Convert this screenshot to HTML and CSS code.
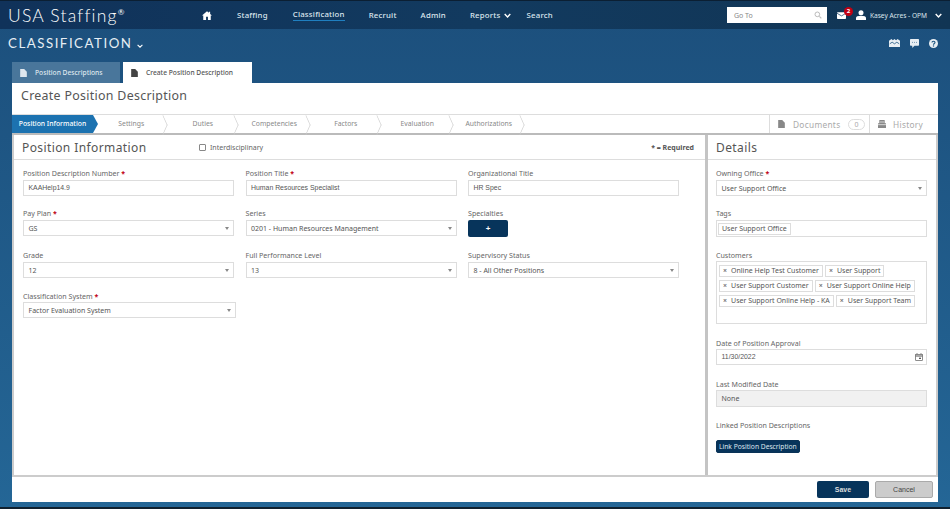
FILE: index.html
```html
<!DOCTYPE html>
<html lang="en">
<head>
  <meta charset="UTF-8" />
  <meta name="viewport" content="width=device-width, initial-scale=1.0"/>
  <title>Create Position Description</title>
  <link rel="stylesheet" href="styles.css">
</head>
<body>

  <!-- Top navigation -->
  <header class="topbar">
    <div class="logo">USA Staffing<sup>®</sup></div>
    <nav class="nav">
      <svg class="home" viewBox="0 0 16 14" width="10" height="9"><path fill="#fff" d="M8 0 0 7h2v7h4.500V9h3v5H14V7h2l-3-2.600V1h-2v1.700z"/></svg>
      <a class="nav-staffing">Staffing</a>
      <a class="nav-active">Classification</a>
      <a>Recruit</a>
      <a>Admin</a>
      <a>Reports <svg class="chev" viewBox="0 0 10 6" width="7" height="5"><path d="M1 1l4 4 4-4" fill="none" stroke="#fff" stroke-width="2"/></svg></a>
      <a class="nav-search">Search</a>
    </nav>
    <div class="top-right">
      <div class="goto">
        <span>Go To</span>
        <svg viewBox="0 0 12 12" width="8" height="8"><circle cx="5" cy="5" r="3.500" fill="none" stroke="#bbb" stroke-width="1.500"/><path d="M8 8l3 3" stroke="#bbb" stroke-width="1.800"/></svg>
      </div>
      <div class="mail">
        <svg viewBox="0 0 12 9" width="9" height="7"><rect width="12" height="9" rx="1" fill="#fff"/><path d="M0 1.500 6 5l6-3.500" fill="none" stroke="#16406a" stroke-width="1"/></svg>
        <b class="badge">2</b>
      </div>
      <svg viewBox="0 0 12 12" width="10" height="10"><circle cx="6" cy="3.200" r="3" fill="#fff"/><path fill="#fff" d="M0 12V9.500C0 8 2 7 6 7s6 1 6 2.500V12z"/></svg>
      <span class="user">Kasey Acres - OPM</span>
      <svg class="chev" viewBox="0 0 10 6" width="7" height="5"><path d="M1 1l4 4 4-4" fill="none" stroke="#fff" stroke-width="2"/></svg>
    </div>
  </header>

  <!-- Section title -->
  <div class="subbar">
    <div class="section">CLASSIFICATION <svg viewBox="0 0 10 6" width="6" height="4"><path d="M1 1l4 4 4-4" fill="none" stroke="#fff" stroke-width="1.800"/></svg></div>
    <div class="sub-icons">
      <svg viewBox="0 0 14 10" width="11" height="8"><path fill="#e8eef3" d="M0 2l3-2 2 1.500L7 0l2 1.500L11 0l3 2v8H0z"/><path d="M1 6l3-2 3 2 3-2 3 2" fill="none" stroke="#1d5582"/></svg>
      <svg viewBox="0 0 12 12" width="9" height="9"><path fill="#e8eef3" d="M1 0h10a1 1 0 0 1 1 1v7a1 1 0 0 1-1 1H6l-3 3V9H1a1 1 0 0 1-1-1V1a1 1 0 0 1 1-1z"/><path d="M3 4.500h1M5.500 4.500h1M8 4.500h1" stroke="#1d5582"/></svg>
      <svg viewBox="0 0 12 12" width="9" height="9"><circle cx="6" cy="6" r="6" fill="#e8eef3"/><path d="M4 4.500C4 2.500 8 2.500 8 4.500 8 6 6 5.800 6 7.500" fill="none" stroke="#1d5582" stroke-width="1.500"/><rect x="5.200" y="8.500" width="1.600" height="1.600" fill="#1d5582"/></svg>
    </div>
  </div>

  <!-- Tabs -->
  <div class="tabs">
    <div class="tab">
      <svg viewBox="0 0 10 12" width="7" height="8"><path fill="#dfe7ee" d="M0 0h6l4 4v8H0z"/></svg>
      Position Descriptions
    </div>
    <div class="tab tab-on">
      <svg viewBox="0 0 10 12" width="7" height="8"><path fill="#444" d="M0 0h6l4 4v8H0z"/></svg>
      Create Position Description
    </div>
  </div>

  <main class="card">
    <h1>Create Position Description</h1>

    <div class="steps">
      <div class="step step-on">Position Information</div>
      <div class="step">Settings</div>
      <div class="step">Duties</div>
      <div class="step">Competencies</div>
      <div class="step">Factors</div>
      <div class="step">Evaluation</div>
      <div class="step">Authorizations</div>
      <div class="step-tools">
        <div class="tool tool-docs">
          <svg viewBox="0 0 10 12" width="7" height="8"><path fill="#888" d="M0 0h6l4 4v8H0z"/></svg>
          Documents <span class="count">0</span>
        </div>
        <div class="tool tool-history">
          <svg viewBox="0 0 12 12" width="8" height="8"><path fill="#888" d="M2 0h8v5h2v7H0V5h2z"/><path d="M3 3h6M0 7h12" stroke="#fff"/></svg>
          History
        </div>
      </div>
    </div>

    <div class="panels">
      <!-- Position information -->
      <section class="panel-main">
        <div class="panel-head">
          <h2>Position Information</h2>
          <label class="check"><span class="box"></span>Interdisciplinary</label>
          <span class="required">* = Required</span>
        </div>
        <div class="form-grid">
          <div class="field">
            <label>Position Description Number <i>*</i></label>
            <div class="input arial">KAAHelp14.9</div>
          </div>
          <div class="field">
            <label>Position Title <i>*</i></label>
            <div class="input arial">Human Resources Specialist</div>
          </div>
          <div class="field">
            <label>Organizational Title</label>
            <div class="input arial">HR Spec</div>
          </div>

          <div class="field">
            <label>Pay Plan <i>*</i></label>
            <div class="input select">GS</div>
          </div>
          <div class="field">
            <label>Series</label>
            <div class="input select">0201 - Human Resources Management</div>
          </div>
          <div class="field">
            <label>Specialties</label>
            <button class="plus">+</button>
          </div>

          <div class="field">
            <label>Grade</label>
            <div class="input select">12</div>
          </div>
          <div class="field">
            <label>Full Performance Level</label>
            <div class="input select">13</div>
          </div>
          <div class="field">
            <label>Supervisory Status</label>
            <div class="input select">8 - All Other Positions</div>
          </div>

          <div class="field field-wide field-tight">
            <label>Classification System <i>*</i></label>
            <div class="input select">Factor Evaluation System</div>
          </div>
        </div>
      </section>

      <!-- Details -->
      <aside class="panel-side">
        <div class="panel-head">
          <h2>Details</h2>
        </div>
        <div class="side-fields">
          <div class="field">
            <label>Owning Office <i>*</i></label>
            <div class="input select">User Support Office</div>
          </div>
          <div class="field">
            <label>Tags</label>
            <div class="input tags"><span class="tag">User Support Office</span></div>
          </div>
          <div class="field field-tight">
            <label>Customers</label>
            <div class="customers">
              <span class="tag"><em>×</em>Online Help Test Customer</span>
              <span class="tag"><em>×</em>User Support</span>
              <span class="tag"><em>×</em>User Support Customer</span>
              <span class="tag"><em>×</em>User Support Online Help</span>
              <span class="tag"><em>×</em>User Support Online Help - KA</span>
              <span class="tag"><em>×</em>User Support Team</span>
            </div>
          </div>
          <div class="field field-tight">
            <label>Date of Position Approval</label>
            <div class="input date arial">11/30/2022
              <svg viewBox="0 0 12 12" width="8" height="8"><rect x="1" y="2" width="10" height="9" fill="none" stroke="#555"/><path d="M1 4.500h10" stroke="#555" stroke-width="1.500"/><path d="M3 0v2M9 0v2" stroke="#555"/><rect x="6" y="7" width="3" height="2" fill="#555"/></svg>
            </div>
          </div>
          <div class="field field-tight">
            <label>Last Modified Date</label>
            <div class="input readonly">None</div>
          </div>
          <div class="field">
            <label>Linked Position Descriptions</label>
            <button class="link-btn">Link Position Description</button>
          </div>
        </div>
      </aside>
    </div>

    <footer class="actions">
      <button class="save">Save</button>
      <button class="cancel">Cancel</button>
    </footer>
  </main>

</body>
</html>
```

FILE: styles.css
```css
* {
  box-sizing: border-box;
}

html, body {
  height: 509px;
  overflow: hidden;
}

body {
  margin: 0;
  background: linear-gradient(#1c4f7c, #246696);
  border-bottom: 2px solid #10202e;
  color: #555;
  font-family: "Noto Sans", sans-serif;
  font-size: 7px;
}

.topbar {
  display: flex;
  align-items: center;
  height: 29px;
  padding-left: 8px;
  background: linear-gradient(90deg, #10325a, #123a5f 50%, #113554);
  border-top: 1px solid #0b1f33;
  color: #fff;
}

.logo {
  width: 194px;
  font-family: Lato, sans-serif;
  font-size: 17.500px;
  font-weight: 300;
  letter-spacing: 1.2px;
  white-space: nowrap;
}

.logo sup {
  font-size: 8px;
  font-weight: 400;
  line-height: 0;
}

.nav {
  display: flex;
  align-items: center;
  font-size: 7.800px;
  font-weight: 500;
  color: #dce6ee;
  letter-spacing: 0.2px;
}

.nav a {
  margin-left: 24px;
  white-space: nowrap;
}

.nav a.nav-staffing {
  margin-left: 25px;
}

.nav a.nav-active {
  margin-left: 25px;
  padding-bottom: 1px;
  border-bottom: 1px solid #1f7fc0;
}

.nav a.nav-search {
  margin-left: 16px;
}

.chev {
  margin-left: 1px;
}

.top-right {
  display: flex;
  align-items: center;
  margin-left: auto;
  margin-right: 8px;
}

.goto {
  display: flex;
  align-items: center;
  justify-content: space-between;
  width: 100px;
  height: 16px;
  padding: 0 5px 0 7px;
  background: #fff;
  color: #888;
  font-size: 7px;
}

.mail {
  position: relative;
  display: flex;
  margin: 0 10px 0 10px;
}

.badge {
  position: absolute;
  top: -5px;
  left: 7px;
  width: 9px;
  height: 9px;
  border-radius: 50%;
  background: #c00012;
  color: #fff;
  font-size: 6px;
  line-height: 9px;
  text-align: center;
}

.user {
  margin: 0 7px 0 4px;
  font-size: 6.600px;
  color: #dce6ee;
}

.subbar {
  display: flex;
  align-items: center;
  justify-content: space-between;
  height: 32px;
  padding: 0 12px 0 8px;
  color: #e6eef4;
}

.section {
  margin-top: -4px;
  font-family: Lato, sans-serif;
  font-size: 13.300px;
  font-weight: 400;
  letter-spacing: 1.500px;
}

.sub-icons {
  display: flex;
  align-items: center;
  gap: 10px;
  margin-top: -4px;
}

.tabs {
  display: flex;
  height: 21px;
  padding-left: 12px;
  margin-top: 1px;
}

.tab {
  display: flex;
  align-items: center;
  gap: 8px;
  width: 108px;
  margin-right: 3px;
  padding-left: 8px;
  background: #49769b;
  color: #dfe7ee;
  font-size: 6.700px;
  font-weight: 500;
}

.tab-on {
  width: 129px;
  background: #fff;
  color: #555;
}

.card {
  display: flex;
  flex-direction: column;
  height: 419px;
  margin: 0 12px;
  background: #fff;
}

h1 {
  height: 31px;
  margin: 0;
  padding: 4px 0 0 9px;
  font-size: 12.400px;
  font-weight: 400;
  color: #555;
  letter-spacing: 0.3px;
}

.steps {
  display: flex;
  align-items: center;
  height: 21px;
  border-top: 1px solid #ddd;
  border-bottom: 2px solid #bbb;
  font-size: 6.800px;
  color: #888;
}

.step {
  position: relative;
  width: 71.500px;
  height: 18px;
  padding-right: 3px;
  line-height: 18px;
  text-align: center;
  white-space: nowrap;
}

.step::after {
  content: "";
  position: absolute;
  top: 2.500px;
  right: -1px;
  width: 13px;
  height: 13px;
  border-top: 1px solid #ccc;
  border-right: 1px solid #ccc;
  transform: scaleX(0.45) rotate(45deg);
}

.step-on {
  width: 81px;
  margin-right: 4px;
  padding-right: 0;
  background: #1c72b0;
  color: #fff;
  font-weight: 500;
}

.step-on::after {
  top: 0;
  right: -5px;
  width: 0;
  height: 0;
  border-top: 9px solid transparent;
  border-bottom: 9px solid transparent;
  border-left: 5px solid #1c72b0;
  border-right: 0;
  transform: none;
}

.step-tools {
  display: flex;
  margin-left: auto;
  height: 18px;
  font-size: 8.300px;
  color: #aaa;
}

.tool {
  display: flex;
  align-items: center;
  padding-left: 8px;
  border-left: 1px solid #ddd;
  letter-spacing: 0.3px;
}

.tool-docs {
  gap: 8px;
  width: 100px;
}

.tool-history {
  gap: 7px;
  width: 69px;
}

.count {
  padding: 0 5px;
  border: 1px solid #ddd;
  border-radius: 7px;
  font-size: 7px;
  line-height: 9px;
}

.panels {
  display: flex;
  flex: 1;
  min-height: 0;
  border: 2px solid #ccc;
  border-top: 0;
}

.panel-main {
  width: 694px;
  border-right: 3px solid #c4c4c4;
}

.panel-side {
  flex: 1;
}

.panel-head {
  display: flex;
  align-items: center;
  height: 25px;
  padding: 0 9px 0 8px;
  border-bottom: 1px solid #ddd;
}

h2 {
  margin: 0;
  font-size: 12px;
  font-weight: 400;
  color: #555;
  letter-spacing: 0.4px;
}

.panel-main h2 {
  width: 177px;
}

.check {
  display: flex;
  align-items: center;
  gap: 4px;
  color: #666;
  font-size: 7px;
}

.box {
  width: 7px;
  height: 7px;
  border: 1px solid #888;
  border-radius: 1px;
}

.required {
  margin-left: auto;
  margin-right: 2px;
  font-size: 7px;
  font-weight: 700;
  color: #555;
}

.form-grid {
  display: grid;
  grid-template-columns: 211px 211px 211px;
  grid-template-rows: 40px 42px 41px 41px;
  column-gap: 11.500px;
  padding: 8px 0 0 9px;
}

.field-wide {
  width: 213px;
}

.field label {
  display: block;
  height: 12px;
  line-height: 11px;
  color: #666;
  font-size: 7.100px;
}

.field-tight label {
  height: 11px;
}

.field i {
  color: #c00012;
  font-style: normal;
  font-weight: 700;
}

.input {
  height: 16px;
  padding-left: 4.500px;
  border: 1px solid #ddd;
  background: #fff;
  color: #555;
  font-size: 7px;
  line-height: 14px;
  white-space: nowrap;
}

.arial {
  font-family: "Liberation Sans", sans-serif;
  font-size: 6.900px;
}

.select {
  position: relative;
  line-height: 15px;
}

.select::after {
  content: "";
  position: absolute;
  top: 6px;
  right: 4px;
  border-top: 3px solid #888;
  border-left: 2px solid transparent;
  border-right: 2px solid transparent;
}

.plus {
  display: block;
  width: 40px;
  height: 17px;
  border: none;
  border-radius: 2px;
  background: #07345b;
  color: #fff;
  font-size: 8px;
  font-weight: 700;
  padding: 0;
}

.side-fields {
  display: grid;
  grid-template-rows: 40px 42px 88px 41px 41px auto;
  padding: 8px 9px 0 8px;
}

.tags {
  height: 17px;
  padding: 1px;
}

.tag {
  display: inline-block;
  height: 12px;
  padding: 0 3px;
  border: 1px solid #ddd;
  color: #555;
  font-size: 7px;
  line-height: 10px;
  white-space: nowrap;
}

.customers {
  display: flex;
  flex-wrap: wrap;
  align-content: flex-start;
  gap: 3px 2px;
  height: 63px;
  padding: 3px 2px;
  border: 1px solid #ddd;
}

.tag em {
  margin-right: 4px;
  color: #777;
  font-style: normal;
  font-weight: 700;
}

.date {
  display: flex;
  align-items: center;
  justify-content: space-between;
  padding-right: 3px;
}

.readonly {
  height: 17px;
  background: #f1f1f1;
  line-height: 15px;
}

.link-btn {
  display: block;
  margin-top: 8px;
  height: 13px;
  padding: 0 2px;
  border: 1px solid #0a3357;
  border-radius: 2px;
  background: #07345b;
  color: #dfe7ee;
  font-family: "Noto Sans", sans-serif;
  font-size: 6.700px;
}

.actions {
  display: flex;
  justify-content: flex-end;
  align-items: center;
  gap: 6px;
  height: 25px;
  padding-right: 5px;
}

.actions button {
  height: 17px;
  border-radius: 2px;
  font-family: "Liberation Sans", sans-serif;
  font-size: 7px;
}

.save {
  width: 52px;
  border: none;
  background: #07345b;
  color: #ddd;
  font-weight: 700;
}

.cancel {
  width: 58px;
  border: 1px solid #aaa;
  background: #ccc;
  color: #444;
}
```
